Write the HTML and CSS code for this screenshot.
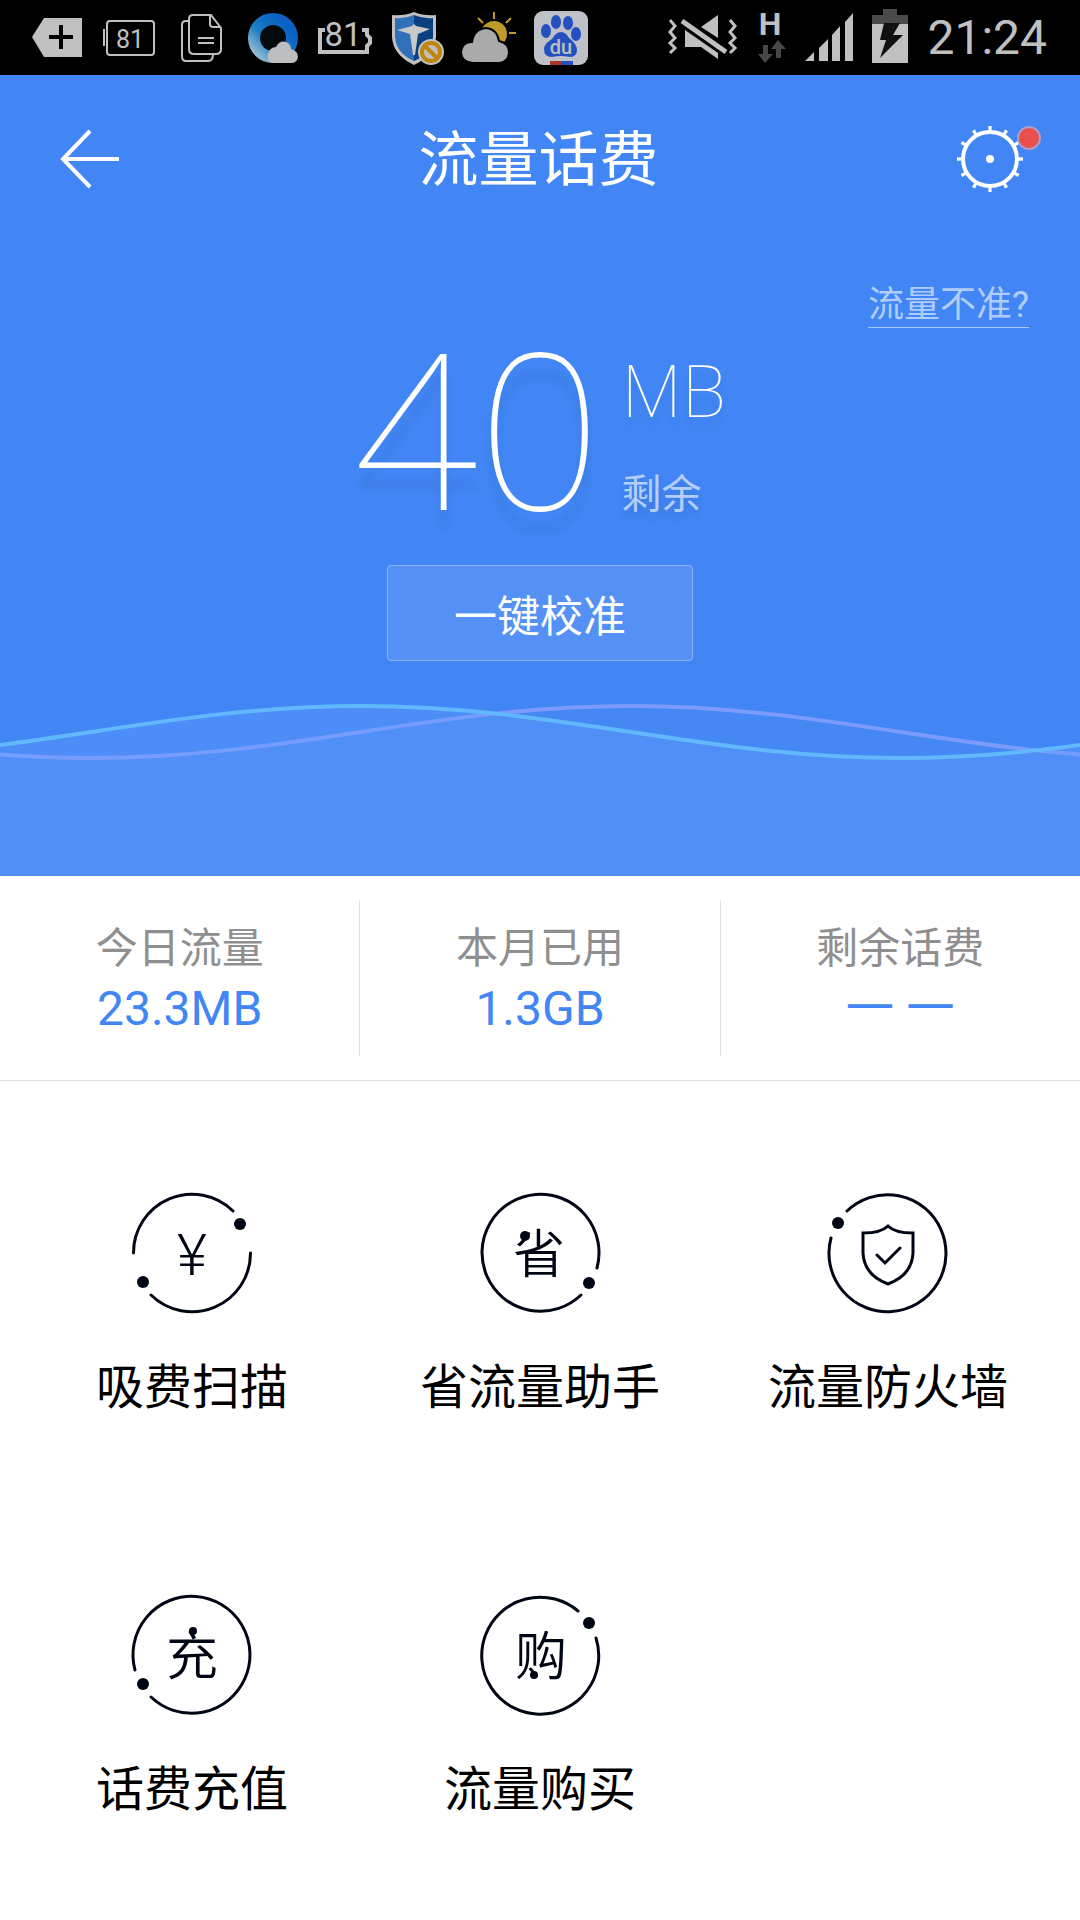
FILE: index.html
```html
<!DOCTYPE html>
<html lang="zh-CN">
<head>
    <meta charset="UTF-8">
    <meta name="viewport" content="width=device-width, initial-scale=1">
    <title>流量话费</title>
    <link rel="stylesheet" href="styles.css">
</head>
<body>
    <div class="status-bar">
        <div class="status-left">
            <svg class="status-icon" viewBox="0 0 54 54">
                <path fill="#c0c0c0" d="M2 26 14 7H52V46H14Z"/>
                <path stroke="#000" stroke-width="4" d="M19 26H43M31 14V38"/>
            </svg>
            <svg class="status-icon" viewBox="0 0 54 54">
                <rect x="5" y="10" width="47" height="34" rx="3" fill="none" stroke="#c0c0c0" stroke-width="2"/>
                <path stroke="#c0c0c0" stroke-width="2" d="M2 18V35"/>
                <text class="icon-text" x="28" y="37" font-size="25">81</text>
            </svg>
            <svg class="status-icon" viewBox="0 0 54 54" fill="none" stroke="#c0c0c0" stroke-width="2">
                <path d="M15 10H12Q8 10 8 14V45Q8 50 12 50H34Q39 50 39 43"/>
                <path d="M19 4H37L47 17V38Q47 43 42 43H20Q15 43 15 38V8Q15 4 19 4Z"/>
                <path d="M36 5V13Q36 16 39 16H46M24 27H40M24 32H40"/>
            </svg>
            <svg class="status-icon" viewBox="0 0 54 54">
                <defs>
                    <linearGradient id="ring" x1="1" y1="0" x2="0" y2="1">
                        <stop offset="0.2" stop-color="#0c62c4"/>
                        <stop offset="0.6" stop-color="#1a80c4"/>
                        <stop offset="1" stop-color="#a8c4d4"/>
                    </linearGradient>
                </defs>
                <circle cx="27" cy="27" r="19" fill="#050a0c" stroke="url(#ring)" stroke-width="12"/>
                <path fill="#bcbec0" d="M26 52Q20 50 22 43Q24 36 30 36Q34 29 40 31Q45 33 45 38Q52 40 52 46Q51 52 45 52Z"/>
            </svg>
            <svg class="status-icon" viewBox="0 0 54 54">
                <path fill="none" stroke="#c0c0c0" stroke-width="4" d="M7 19H2V41H49V35L52 32V27L49 24V19H44"/>
                <text class="icon-text" x="25" y="35" font-size="33">81</text>
            </svg>
            <svg class="status-icon" viewBox="0 0 54 54">
                <path fill="#c0c0c0" d="M2 4Q14 5 24 1Q34 5 46 4V26Q45 44 24 54Q3 44 2 26Z"/>
                <path fill="#2f70b8" d="M5 7Q15 8 24 4V50Q6 42 5 26Z"/>
                <path fill="#0a4080" d="M43 7Q33 8 24 4V50Q42 42 43 26Z"/>
                <path fill="#c8c8c8" d="M7 19 22 15 24 13 26 15 40 18 28 23 25 44H23L20 23Z"/>
                <circle cx="41" cy="41" r="13" fill="#c0c0c0"/>
                <circle cx="41" cy="41" r="9" fill="none" stroke="#c0860c" stroke-width="4"/>
                <path stroke="#c0860c" stroke-width="4" d="M35 35 47 47"/>
            </svg>
            <svg class="status-icon" viewBox="0 0 54 54">
                <circle cx="32" cy="23" r="13" fill="#bf9a2c"/>
                <path stroke="#bf9a2c" stroke-width="2" d="M32 1V8M47 22H54M44 12 49 7M21 12 16 7"/>
                <path fill="#aaa" stroke="#000" stroke-width="2" d="M11 52Q-1 51-1 41Q0 31 10 31Q12 18 24 17Q35 18 37 30Q47 32 47 42Q46 51 37 52Z"/>
            </svg>
            <svg class="status-icon" viewBox="0 0 54 54">
                <rect width="54" height="54" rx="9" fill="#bfc1c8"/>
                <g fill="#2450c0">
                    <ellipse cx="12" cy="20" rx="5" ry="7"/>
                    <ellipse cx="22" cy="11" rx="5" ry="7"/>
                    <ellipse cx="34" cy="12" rx="5" ry="7"/>
                    <ellipse cx="42" cy="23" rx="5" ry="7"/>
                    <path d="M27 21Q32 21 35 27Q43 33 43 39Q43 46 36 46Q27 44 18 46Q10 46 10 38Q10 33 18 28Q22 21 27 21Z"/>
                    <path d="M27 50H39V54H27Z"/>
                </g>
                <path fill="#a83828" d="M16 50H27V54H16Z"/>
                <text class="icon-text" x="27" y="43" font-size="20" font-weight="500">du</text>
            </svg>
        </div>
        <div class="status-right">
            <svg class="mute-icon" viewBox="0 0 72 54">
                <g fill="none" stroke="#c0c0c0" stroke-width="3">
                    <path d="M3 9 8 15 3 21 8 27 3 32 8 37 3 42M63 9 68 15 63 21 68 27 63 32 68 37 63 42"/>
                    <path stroke-width="5" d="M15 10 59 41"/>
                </g>
                <path fill="#c0c0c0" d="M34 16 51 4V27ZM18 19V36H34L51 48V42Z"/>
            </svg>
            <svg class="network-icon" viewBox="0 0 28 54">
                <text class="icon-text" x="12" y="24" font-size="32" font-weight="700">H</text>
                <path fill="#484848" d="M5 34H10V43H15L7 52 0 43H5ZM20 29 28 38H23V47H18V38H13Z"/>
            </svg>
            <svg class="signal-icon" viewBox="0 0 48 54">
                <path fill="#c0c0c0" d="M0 50 9 41V50ZM14 37 23 28V50H14ZM27 24 35 15V50H27ZM40 11 48 2V50H40Z"/>
            </svg>
            <svg class="battery-icon" viewBox="0 0 36 54">
                <path fill="#4a4a4a" d="M11-2H25V4H36V13H0V4H11Z"/>
                <path fill="#c0c0c0" d="M0 13H36V52H0Z"/>
                <path fill="#111" d="M12 12H28L21 24H31L8 47 14 29H8Z"/>
            </svg>
            <span class="clock">21:24</span>
        </div>
    </div>

    <div class="hero">
        <header class="header">
            <button class="icon-button" aria-label="返回">
                <svg width="60" height="60" viewBox="0 0 60 60" fill="none" stroke="#fff" stroke-width="4">
                    <path d="M59 30H4M30 2 3 30 30 58"/>
                </svg>
            </button>
            <h1 class="title">流量话费</h1>
            <button class="icon-button settings" aria-label="设置">
                <svg width="66" height="66" viewBox="0 0 66 66">
                    <circle cx="33" cy="33" r="27" fill="none" stroke="#fff" stroke-width="4"/>
                    <circle cx="33" cy="33" r="30" fill="none" stroke="#fff" stroke-width="6" pathLength="120" stroke-dasharray="2 8" stroke-dashoffset="1"/>
                    <circle cx="33" cy="33" r="4" fill="#fff"/>
                </svg>
                <span class="badge"></span>
            </button>
        </header>

        <div class="hint-row">
            <a class="hint" href="#">流量不准?</a>
        </div>

        <div class="balance">
            <span class="amount">40</span>
            <div class="balance-side">
                <span class="unit">MB</span>
                <span class="remain">剩余</span>
            </div>
        </div>

        <button class="calibrate">一键校准</button>

        <svg class="wave" viewBox="0 700 1080 176" preserveAspectRatio="none">
            <path fill="#4588f3" d="M-449 706C-252 706-106 758 91 758S434 706 631 706S974 758 1171 758V876H-449Z"/>
            <path class="wave-line" stroke="#7b9bff" d="M-449 706C-252 706-106 758 91 758S434 706 631 706S974 758 1171 758"/>
            <path fill="#66a0ff" fill-opacity="0.3" d="M-179 758C18 758 164 706 361 706S704 758 901 758S1244 706 1441 706V876H-179Z"/>
            <path class="wave-line" stroke="#61b8ff" d="M-179 758C18 758 164 706 361 706S704 758 901 758S1244 706 1441 706"/>
        </svg>
    </div>

    <div class="stats">
        <div class="stat">
            <span class="stat-label">今日流量</span>
            <span class="stat-value">23.3MB</span>
        </div>
        <div class="stat">
            <span class="stat-label">本月已用</span>
            <span class="stat-value">1.3GB</span>
        </div>
        <div class="stat">
            <span class="stat-label">剩余话费</span>
            <span class="stat-value stat-empty">— —</span>
        </div>
    </div>

    <div class="menu">
        <button class="menu-item">
            <svg class="menu-icon" viewBox="0 0 120 120">
                <path class="ring" d="M1.500 60A58.500 58.500 0 0 1 101 18M118.500 60A58.500 58.500 0 0 1 19 102"/>
                <circle cx="108" cy="31" r="6"/>
                <circle cx="11" cy="89" r="6"/>
                <text class="ring-text yen" x="60" y="82">¥</text>
            </svg>
            <span class="menu-label">吸费扫描</span>
        </button>
        <button class="menu-item">
            <svg class="menu-icon" viewBox="0 0 120 120">
                <path class="ring" d="M117 75A58.500 58.500 0 1 0 101 102"/>
                <circle cx="109" cy="90" r="6"/>
                <text class="ring-text" x="59" y="80">省</text>
                <circle cx="45" cy="43" r="5"/>
            </svg>
            <span class="menu-label">省流量助手</span>
        </button>
        <button class="menu-item">
            <svg class="menu-icon" viewBox="0 0 120 120">
                <path class="ring" d="M19 18A58.500 58.500 0 1 1 3 45"/>
                <circle cx="10" cy="30" r="6"/>
                <path class="ring" d="M60 33Q53 40 35 40V60Q36 82 60 91Q84 82 85 60V40Q67 40 60 33ZM49 62 57 70 72 55"/>
            </svg>
            <span class="menu-label">流量防火墙</span>
        </button>
        <button class="menu-item">
            <svg class="menu-icon" viewBox="0 0 120 120">
                <path class="ring" d="M19 102A58.500 58.500 0 1 0 3 75"/>
                <circle cx="11" cy="89" r="6"/>
                <text class="ring-text" x="60" y="80">充</text>
                <circle cx="61" cy="36" r="4"/>
            </svg>
            <span class="menu-label">话费充值</span>
        </button>
        <button class="menu-item">
            <svg class="menu-icon" viewBox="0 0 120 120">
                <path class="ring" d="M98 16A58.500 58.500 0 1 0 116 43"/>
                <circle cx="109" cy="28" r="6"/>
                <text class="ring-text" x="61" y="80">购</text>
                <circle cx="54" cy="80" r="4"/>
            </svg>
            <span class="menu-label">流量购买</span>
        </button>
    </div>
</body>
</html>
```
FILE: styles.css
```css
body {
    font-family: Roboto, "Noto Sans CJK SC", sans-serif;
    margin: 0;
    background-color: #fff;
    color: #000;
}
button {
    font-family: inherit;
    border: none;
    padding: 0;
    background: none;
    color: inherit;
    cursor: pointer;
}
svg {
    display: block;
    overflow: visible;
}
/* System status bar */
.status-bar {
    display: flex;
    justify-content: space-between;
    align-items: center;
    height: 75px;
    padding: 0 33px 0 30px;
    background-color: #000;
}
.status-left {
    display: flex;
    gap: 18px;
}
.status-right {
    display: flex;
    align-items: center;
    gap: 19px;
}
.status-icon {
    width: 54px;
    height: 54px;
}
.mute-icon {
    width: 72px;
    height: 54px;
}
.network-icon {
    width: 28px;
    height: 54px;
}
.signal-icon {
    width: 48px;
    height: 54px;
}
.battery-icon {
    width: 36px;
    height: 54px;
}
.icon-text {
    fill: #c0c0c0;
    text-anchor: middle;
}
.clock {
    font-size: 48px;
    line-height: 54px;
    color: #c0c0c0;
}
/* Blue area */
.hero {
    display: flex;
    flex-direction: column;
    background-color: #4186f4;
    color: #fff;
}
.header {
    display: flex;
    justify-content: space-between;
    align-items: center;
    height: 168px;
    padding: 0 57px 0 60px;
}
.title {
    margin: 0;
    padding-top: 4px;
    font-size: 60px;
    font-weight: 400;
    line-height: 72px;
}
.settings {
    position: relative;
}
/* Red dot over the settings icon */
.badge {
    position: absolute;
    top: 0;
    right: -18px;
    width: 20px;
    height: 20px;
    border: 2px solid #b09cc4;
    border-radius: 50%;
    background-color: #e84f4d;
}
.hint-row {
    display: flex;
    justify-content: flex-end;
    padding: 40px 51px 0;
}
.hint {
    font-size: 36px;
    line-height: 44px;
    border-bottom: 1px solid #a6c7fa;
    color: #b0ccfb;
    text-decoration: none;
}
.balance {
    display: flex;
    justify-content: center;
    gap: 20px;
    margin-top: 18px;
}
.amount {
    font-family: "Noto Sans", sans-serif;
    font-size: 217px;
    font-weight: 100;
    line-height: 160px;
    text-shadow: 0 20px 8px rgba(0, 0, 0, 0.07);
}
.balance-side {
    display: flex;
    flex-direction: column;
    gap: 38px;
    padding-top: 5px;
}
.unit {
    font-family: "Noto Sans", sans-serif;
    font-size: 72px;
    font-weight: 100;
    line-height: 76px;
    text-shadow: 0 12px 8px rgba(0, 0, 0, 0.07);
}
.remain {
    font-size: 40px;
    line-height: 60px;
    color: #b3cefb;
    text-shadow: 0 6px 8px rgba(0, 0, 0, 0.1);
}
.calibrate {
    align-self: center;
    width: 306px;
    height: 96px;
    margin-top: 40px;
    border: 1px solid #8cb5f8;
    border-radius: 4px;
    background-color: #5591f4;
    font-size: 43px;
    color: #fff;
}
.wave {
    width: 100%;
    height: 176px;
    margin-top: 39px;
    overflow: hidden;
}
.wave-line {
    fill: none;
    stroke-width: 4;
    vector-effect: non-scaling-stroke;
}
/* Usage numbers */
.stats {
    display: flex;
    padding: 24px 0;
    border-bottom: 1px solid #e0e0e0;
}
.stat {
    flex: 1;
    display: flex;
    flex-direction: column;
    align-items: center;
    box-sizing: border-box;
    height: 156px;
    padding-top: 19px;
    border-right: 1px solid #e0e0e0;
}
.stat:last-child {
    border-right: none;
}
.stat-label {
    font-size: 42px;
    line-height: 60px;
    color: #8f8f8f;
}
.stat-value {
    font-size: 48px;
    line-height: 60px;
    color: #4186f4;
}
.stat-empty {
    font-family: "Noto Sans", sans-serif;
    line-height: 44px;
}
/* Feature buttons */
.menu {
    display: grid;
    grid-template-columns: repeat(3, 1fr);
    padding: 0 18px;
}
.menu-item {
    display: flex;
    flex-direction: column;
    align-items: center;
    gap: 39px;
    padding: 112px 0 59px;
}
.menu-icon {
    width: 120px;
    height: 120px;
    fill: #000614;
}
.ring {
    fill: none;
    stroke: #000614;
    stroke-width: 3;
    stroke-linecap: round;
}
.ring-text {
    font-family: "Noto Sans CJK SC", sans-serif;
    font-size: 52px;
    font-weight: 350;
    text-anchor: middle;
}
.yen {
    font-family: Roboto, sans-serif;
    font-size: 58px;
    font-weight: 300;
}
.menu-label {
    font-size: 48px;
    line-height: 72px;
}
```
